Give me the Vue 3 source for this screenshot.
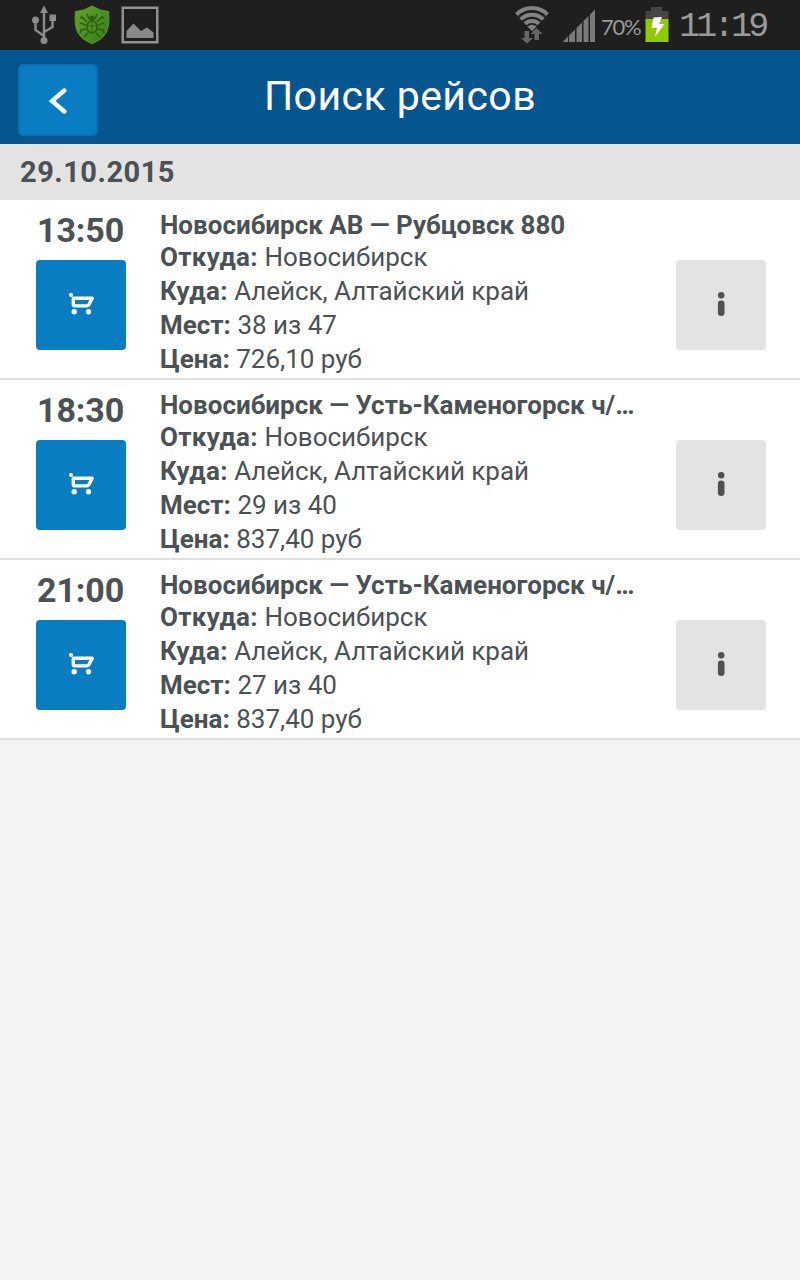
<template>
  <div class="screen">
    <div class="status-bar">
      <div class="status-left">
        <svg class="usb" width="24" height="40" viewBox="0 0 24 40">
          <path d="M12 8V36M12 32L3.500 26V18M12 28L20.500 23V15" fill="none" stroke="#8c8c8c" stroke-width="2.400" />
          <path d="M12 1.500L16 9H8Z" fill="#8c8c8c" />
          <circle cx="3.500" cy="16" r="3.500" fill="#8c8c8c" />
          <rect x="17.500" y="10.500" width="6.500" height="6.500" fill="#8c8c8c" />
          <circle cx="12" cy="36.500" r="3.500" fill="#8c8c8c" />
        </svg>
        <svg class="shield" width="36" height="40" viewBox="0 0 36 40">
          <defs>
            <linearGradient id="shield-fill" x1="0" y1="0" x2="1" y2="1">
              <stop offset="0" stop-color="#63a52b" />
              <stop offset="1" stop-color="#347d16" />
            </linearGradient>
          </defs>
          <path d="M18 1Q26 6 34.500 6.500Q36 19 32.500 27Q28 35 18 38.500Q8 35 3.500 27Q0 19 1.500 6.500Q10 6 18 1Z" fill="url(#shield-fill)" stroke="#5a9a26" />
          <g fill="none" stroke="#2b5f15" stroke-width="1.600">
            <path d="M13 17L8 12L6 13M12 20L6 18M12 24L7 25L6 28M14 28L10 32M23 17L28 12L30 13M24 20L30 18M24 24L29 25L30 28M22 28L26 32M15 14L13 9M21 14L23 9" />
            <ellipse cx="18" cy="22" rx="5" ry="6" fill="#4f9222" />
            <path d="M14 21H22M18 17V27" stroke-width="1" />
          </g>
          <circle cx="18" cy="13.500" r="2.800" fill="#2b5f15" />
        </svg>
        <svg class="picture" width="38" height="38" viewBox="0 0 38 38">
          <rect x="1.750" y="1.750" width="34.500" height="34.500" fill="none" stroke="#919191" stroke-width="2.500" />
          <path d="M5.500 32V25L12.500 17.500L20 25L26 21.500L32.500 26.500V32Z" fill="#8a8a8a" />
        </svg>
      </div>
      <div class="status-right">
        <svg class="wifi" width="34" height="40" viewBox="0 0 34 40">
          <g fill="none" stroke="#828282" stroke-width="4">
            <path d="M1.500 10.500A22 22 0 0 1 32.500 10.500" />
            <path d="M5.700 15.300A16 16 0 0 1 28.300 15.300" />
            <path d="M10 19.800A10 10 0 0 1 24 19.800" />
          </g>
          <path d="M12.300 22.500Q17 19 21.700 22.500L17 27Z" fill="#828282" />
          <path d="M9.500 27H14V34H18L12 39.500L6 34H9.500ZM19.500 36V30H15.500L21.500 24L27.500 30H24V36Z" fill="#666" />
        </svg>
        <svg class="signal" width="34" height="34" viewBox="0 0 34 34">
          <path d="M0.500 33L6 27.500V33ZM7 33V26.500L13 20.500V33ZM14.500 33V19L20 13.500V33ZM21.500 33V12L26.500 7V33ZM28 33V5.500L33 0.500V33Z" fill="#7a7a7a" />
        </svg>
        <span class="percent">70%</span>
        <svg class="battery" width="24" height="35" viewBox="0 0 24 35">
          <path d="M6 0H17V4H23.500V12H0.500V4H6Z" fill="#454545" />
          <rect x="0.500" y="12" width="23" height="23" fill="#8ecb05" />
          <path d="M8.500 10.500L17 10L14 17H19.500L10 30L12 21H6.500Z" fill="#fff" />
        </svg>
        <span class="clock">11:19</span>
      </div>
    </div>

    <header class="header">
      <button class="back-btn">
        <svg width="18" height="30" viewBox="0 0 18 30">
          <path d="M15.300 5.500L3 16L15.300 26.500" fill="none" stroke="#fff" stroke-width="4.400" stroke-linecap="round" />
        </svg>
      </button>
      <h1 class="title">Поиск рейсов</h1>
    </header>

    <div class="date">29.10.2015</div>

    <div v-for="trip in trips" :key="trip.time" class="trip">
      <div class="buy">
        <div class="time">{{ trip.time }}</div>
        <button class="square-btn cart-btn">
          <svg width="26" height="24" viewBox="0 0 26 24">
            <path d="M5.300 5.200H24.200L20.800 11.800Q20.200 12.900 19 12.900H7Q5.300 12.900 5.300 11.200Z" fill="none" stroke="#fff" stroke-width="3.400" stroke-linejoin="round" />
            <circle cx="3" cy="1.900" r="2" fill="#fff" />
            <circle cx="6.200" cy="18.800" r="2.700" fill="#fff" />
            <circle cx="20.500" cy="18.800" r="2.700" fill="#fff" />
          </svg>
        </button>
      </div>
      <div class="details">
        <div class="route">{{ trip.route }}</div>
        <div class="line from"><b>Откуда:</b> {{ trip.from }}</div>
        <div class="line to"><b>Куда:</b> {{ trip.to }}</div>
        <div class="line"><b>Мест:</b> {{ trip.free }} из {{ trip.seats }}</div>
        <div class="line"><b>Цена:</b> {{ trip.price }} руб</div>
      </div>
      <button class="square-btn info-btn">
        <svg width="8" height="26" viewBox="0 0 8 26">
          <circle cx="4.200" cy="3.300" r="3.200" fill="#4b5154" />
          <rect x="0.900" y="8.600" width="6.600" height="15.400" rx="3.300" fill="#4b5154" />
        </svg>
      </button>
    </div>
  </div>
</template>

<script setup>
import { ref } from 'vue'

const trips = ref([
  { time: '13:50', route: 'Новосибирск АВ — Рубцовск 880', from: 'Новосибирск', to: 'Алейск, Алтайский край', free: 38, seats: 47, price: '726,10' },
  { time: '18:30', route: 'Новосибирск — Усть-Каменогорск ч/…', from: 'Новосибирск', to: 'Алейск, Алтайский край', free: 29, seats: 40, price: '837,40' },
  { time: '21:00', route: 'Новосибирск — Усть-Каменогорск ч/…', from: 'Новосибирск', to: 'Алейск, Алтайский край', free: 27, seats: 40, price: '837,40' },
])
</script>

<style>
body {
  margin: 0;
  background: #f3f3f3;
}
</style>

<style scoped>
.screen {
  width: 800px;
  min-height: 1280px;
  background: #f3f3f3;
  color: #4b5154;
  font-family: Roboto, "Noto Sans", sans-serif;
}

button {
  border: none;
  padding: 0;
  display: flex;
  align-items: center;
  justify-content: center;
}

/* Status bar */
.status-bar {
  height: 50px;
  background: #1f1f1f;
  display: flex;
  justify-content: space-between;
}
.status-left {
  display: flex;
  padding-left: 32px;
}
.status-right {
  display: flex;
  padding-right: 32px;
}
.status-bar svg { flex: none; }
.usb { margin-top: 4px; }
.shield { margin: 5px 0 0 18px; }
.picture { margin: 6px 0 0 11px; }
.wifi { margin-top: 4px; }
.signal { margin: 9px 0 0 13px; }
.percent {
  width: 43px;
  margin-left: 5px;
  font: 400 22px/53px Lato, sans-serif;
  letter-spacing: -1.200px;
  color: #9a9a9a;
  white-space: nowrap;
}
.battery { margin: 7px 0 0 1px; }
.clock {
  width: 89px;
  margin-left: 10px;
  font: 35px/54px "Liberation Mono", monospace;
  letter-spacing: -3.700px;
  color: #9a9a9a;
  white-space: nowrap;
}

/* Header */
.header {
  height: 94px;
  background: #05558f;
  display: grid;
  grid-template-columns: 98px 1fr 98px;
}
.back-btn {
  width: 80px;
  height: 72px;
  margin: 14px 0 0 18px;
  box-sizing: border-box;
  border: 2px solid #0b70b1;
  border-radius: 5px;
  background: #087dc2;
}
.title {
  margin: 0;
  text-align: center;
  font-size: 41px;
  font-weight: 400;
  line-height: 92px;
  letter-spacing: 0.450px;
  color: #fff;
}

.date {
  height: 56px;
  padding-left: 20px;
  background: #e3e3e3;
  font-size: 29px;
  font-weight: 700;
  line-height: 56px;
  letter-spacing: 0.500px;
}

/* Trips */
.trip {
  height: 180px;
  box-sizing: border-box;
  border-bottom: 2px solid #e0e0e0;
  background: #fff;
  display: flex;
}
.buy {
  width: 160px;
  flex: none;
}
.time {
  height: 60px;
  padding-left: 37px;
  font-size: 34px;
  font-weight: 700;
  line-height: 61px;
  letter-spacing: -0.100px;
}
.square-btn {
  width: 90px;
  height: 90px;
  border-radius: 4px;
}
.cart-btn {
  margin-left: 36px;
  background: #087dc2;
}
.details {
  width: 516px;
  padding-top: 8px;
  white-space: nowrap;
  font-size: 26px;
}
.route {
  height: 32px;
  font-weight: 700;
  line-height: 34px;
}
.line {
  height: 34px;
  line-height: 34px;
}
.from b,
.to b {
  letter-spacing: 0.300px;
}
.to { letter-spacing: -0.050px; }
.info-btn {
  margin-top: 60px;
  background: #e3e3e3;
}
</style>
